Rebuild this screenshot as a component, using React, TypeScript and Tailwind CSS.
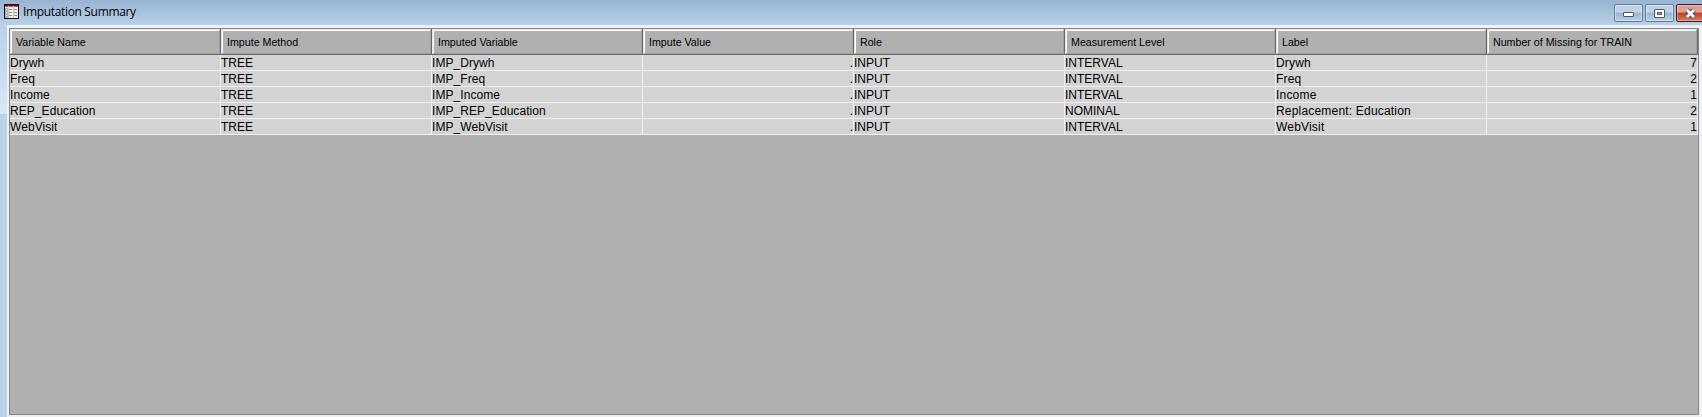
import React from "react";

const headers = [
  "Variable Name",
  "Impute Method",
  "Imputed Variable",
  "Impute Value",
  "Role",
  "Measurement Level",
  "Label",
  "Number of Missing for TRAIN",
];

const rows = [
  ["Drywh", "TREE", "IMP_Drywh", ".", "INPUT", "INTERVAL", "Drywh", "7"],
  ["Freq", "TREE", "IMP_Freq", ".", "INPUT", "INTERVAL", "Freq", "2"],
  ["Income", "TREE", "IMP_Income", ".", "INPUT", "INTERVAL", "Income", "1"],
  ["REP_Education", "TREE", "IMP_REP_Education", ".", "INPUT", "NOMINAL", "Replacement: Education", "2"],
  ["WebVisit", "TREE", "IMP_WebVisit", ".", "INPUT", "INTERVAL", "WebVisit", "1"],
];

const columns = "grid grid-cols-[repeat(8,211px)]";

function cellAlign(i: number) {
  if (i === 3 || i === 7) return "text-right";
  if (i === 6) return "text-left tracking-[0.19px]";
  if (i === 0 || i === 2) return "text-left tracking-[0.06px]";
  return "text-left";
}

function TableIcon() {
  return (
    <svg width="15" height="15" viewBox="0 0 15 15" shapeRendering="crispEdges" className="block">
      <rect width="15" height="15" fill="#141212" />
      <rect x="1" y="1" width="13" height="13" fill="#f3f1ef" />
      <rect x="1" y="1" width="13" height="1" fill="#7d1014" />
      <path d="M1 2h3v1h-3zM5 2h4v1h-4zM10 2h4v1h-4z" fill="#b94346" />
      <rect x="1" y="4" width="3" height="10" fill="#b1adab" />
      <path d="M4 3h1v11h-1zM9 3h1v11h-1z" fill="#c9c5c2" />
      <path d="M5 5h3v1h-3zM10 5h3v1h-3zM5 8h3v1h-3zM10 8h3v1h-3zM5 11h3v1h-3zM10 11h3v1h-3z" fill="#8b8784" />
      <path d="M2 5h1v1h-1zM2 8h1v1h-1zM2 11h1v1h-1z" fill="#ffffff" />
    </svg>
  );
}

const buttonBase = "flex h-[18px] w-[29px] shrink-0 items-center justify-center rounded-[2px] border";
const blueButton =
  "border-[#5d7a98] bg-linear-to-b from-[#bfd2e6] from-45% via-[#98b5d3] via-50% to-[#b9d1e9] shadow-[inset_0_0_0_1px_rgba(255,255,255,0.45)]";

export default function App() {
  return (
    <div className="flex h-[417px] w-[1702px] flex-col overflow-hidden bg-[#bad1ea] font-['Liberation_Sans',Arial,sans-serif] text-black">
      <header className="flex h-[25px] shrink-0 items-start bg-linear-to-b from-[#98b4d2] to-[#b8d0e9]">
        <div className="flex w-[1614px] shrink-0 items-start gap-[4px] pt-[4px] pl-[4px]">
          <TableIcon />
          <h1 className="font-['Open_Sans','Noto_Sans',sans-serif] text-[12px] leading-[16px] tracking-[-0.34px]">
            Imputation Summary
          </h1>
        </div>
        <div className="flex gap-[2px] pt-[4px]">
          <div className={`${buttonBase} ${blueButton}`}>
            <div className="mt-[3px] h-[5px] w-[11px] rounded-[1px] border border-[#53565e] bg-white" />
          </div>
          <div className={`${buttonBase} ${blueButton}`}>
            <div className="flex h-[9px] w-[11px] items-center justify-center rounded-[1px] border border-[#53565e] bg-white">
              <div className="h-[3px] w-[5px] border border-[#53565e] bg-[#9cb6d2]" />
            </div>
          </div>
          <div
            className={`${buttonBase} border-[#4b1820] bg-linear-to-b from-[#dfa196] from-45% via-[#bb3d29] via-50% to-[#d58068] shadow-[inset_0_0_0_1px_rgba(255,255,255,0.3)]`}
          >
            <svg width="13" height="11" viewBox="0 0 13 11">
              <path d="M3 2l7 7M10 2l-7 7" stroke="#55545e" strokeWidth="5" />
              <path d="M3 2l7 7M10 2l-7 7" stroke="#fff" strokeWidth="2.8" />
            </svg>
          </div>
        </div>
      </header>
      <div className="flex min-h-0 flex-1">
        <div className="w-[7px] shrink-0">
          <div className="h-[89px] bg-linear-to-b from-[#b9d1ea] via-[#c5daf1] to-[#dbe9f7]" />
        </div>
        <main className="flex-1 bg-[#f0f0f0] pt-[3px] pl-[2px]">
          <div className="h-[387px] w-[1690px] border border-[#828790] bg-[#b0b0b0]">
            <div className={`${columns} h-[26px]`}>
              {headers.map((header) => (
                <div
                  key={header}
                  className="flex border-r border-b border-[#696969] bg-[#b0b0b0] pt-[5px] pl-[6px] text-[10.67px] leading-[16px] whitespace-nowrap shadow-[inset_1px_1px_0_#e3e3e3,inset_-1px_-1px_0_#a0a0a0,inset_2px_2px_0_#fff]"
                >
                  {header}
                </div>
              ))}
            </div>
            {rows.map((row) => (
              <div key={row[0]} className={`${columns} h-[16px]`}>
                {row.map((value, i) => (
                  <div
                    key={i}
                    className={`h-[16px] border-r border-b border-[#f0f0f0] bg-[#d3d3d3] pt-px text-[12px] leading-[15px] whitespace-nowrap ${cellAlign(i)}`}
                  >
                    {value}
                  </div>
                ))}
              </div>
            ))}
          </div>
        </main>
      </div>
    </div>
  );
}
